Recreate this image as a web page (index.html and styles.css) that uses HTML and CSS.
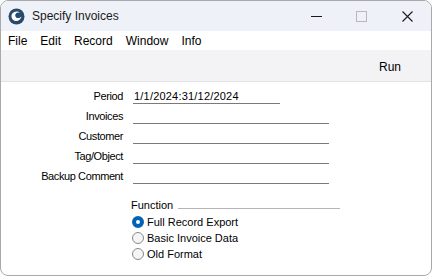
FILE: index.html
```html
<!DOCTYPE html>
<html lang="en">
<head>
    <meta charset="UTF-8">
    <title>Specify Invoices</title>
    <link rel="stylesheet" href="styles.css">
</head>
<body>
    <div class="window">
        <div class="titlebar">
            <svg class="app-icon" width="17" height="17" viewBox="0 0 17 17">
                <circle cx="8.5" cy="8.5" r="8" fill="#284a6c"/>
                <path d="M3.5 7 C4.5 3.5 9.5 2.5 12 4.5 C9 4 6.5 5.5 7.5 8.5 C8.5 10.5 11.5 10.5 13.5 8.5 C13 12 9 14 6 12.5 C4 11.5 3.2 9.2 3.5 7 Z" fill="#ffffff"/>
            </svg>
            <span class="title">Specify Invoices</span>
            <div class="controls">
                <span class="ctl-min"></span>
                <span class="ctl-max"></span>
                <svg class="ctl-close" width="11" height="11" viewBox="0 0 11 11">
                    <path d="M0.5 0.5 L10.5 10.5 M10.5 0.5 L0.5 10.5" stroke="#1a1a1a" stroke-width="1.1"/>
                </svg>
            </div>
        </div>

        <div class="menubar">
            <span>File</span>
            <span>Edit</span>
            <span>Record</span>
            <span>Window</span>
            <span>Info</span>
        </div>

        <div class="toolbar">
            <span class="tool-btn">Run</span>
        </div>

        <div class="content">
            <div class="form">
                <label>Period</label>
                <div class="field short">1/1/2024:31/12/2024</div>
                <label>Invoices</label>
                <div class="field"></div>
                <label>Customer</label>
                <div class="field"></div>
                <label>Tag/Object</label>
                <div class="field"></div>
                <label>Backup Comment</label>
                <div class="field"></div>
            </div>

            <div class="group">
                <div class="group-head">
                    <span>Function</span>
                    <span class="group-line"></span>
                </div>
                <div class="radio"><span class="dot checked"></span>Full Record Export</div>
                <div class="radio"><span class="dot"></span>Basic Invoice Data</div>
                <div class="radio"><span class="dot"></span>Old Format</div>
            </div>
        </div>
    </div>
</body>
</html>
```

FILE: styles.css
```css
html, body {
    margin: 0;
    padding: 0;
    background: #ffffff;
}
body {
    font-family: "Liberation Sans", Arial, sans-serif;
    font-size: 12px;
    color: #000;
}
.window {
    width: 432px;
    height: 276px;
    box-sizing: border-box;
    border: 1px solid #a9a9a9;
    border-radius: 8px;
    overflow: hidden;
    display: flex;
    flex-direction: column;
    background: #ffffff;
}
.titlebar {
    height: 30px;
    background: #eef2f8;
    display: flex;
    align-items: center;
    padding-left: 7px;
}
.app-icon {
    margin-right: 7px;
}
.title {
    font-size: 12px;
    color: #1a1a1a;
}
.controls {
    margin-left: auto;
    display: flex;
    align-items: center;
    height: 100%;
}
.ctl-min {
    width: 11px;
    height: 1px;
    background: #1a1a1a;
    margin-right: 34px;
}
.ctl-max {
    width: 9px;
    height: 9px;
    border: 1px solid #b8b8b8;
    margin-right: 35px;
}
.ctl-close {
    margin-right: 18px;
}
.menubar {
    height: 19px;
    display: flex;
    align-items: center;
    gap: 13px;
    padding-left: 7px;
    background: #ffffff;
}
.toolbar {
    height: 31px;
    background: #f3f3f5;
    border-bottom: 1px solid #e2e2e2;
    display: flex;
    align-items: center;
    justify-content: flex-end;
    padding-right: 30px;
}
.tool-btn {
    padding-top: 3px;
}
.content {
    flex: 1;
    font-size: 11px;
}
.form {
    display: grid;
    grid-template-columns: 122px 196px;
    column-gap: 10px;
    row-gap: 5px;
    padding-top: 7px;
}
.form label {
    text-align: right;
    line-height: 14px;
    height: 15px;
    letter-spacing: -0.4px;
}
.field {
    height: 14px;
    line-height: 14px;
    border-bottom: 1px solid #7a7a7a;
    padding-left: 1px;
    letter-spacing: 0.2px;
}
.field.short {
    width: 146px;
}
.group {
    margin-left: 129px;
    width: 210px;
    margin-top: 14px;
}
.group-head {
    display: flex;
    align-items: flex-end;
    height: 14px;
    line-height: 14px;
    padding-left: 1px;
    margin-bottom: 2px;
}
.group-line {
    flex: 1;
    border-bottom: 1px solid #b5b5b5;
    margin-left: 5px;
    margin-bottom: 3px;
}
.radio {
    display: flex;
    align-items: center;
    height: 16px;
    padding-left: 2px;
}
.dot {
    width: 10px;
    height: 10px;
    border: 1px solid #8a8a8a;
    border-radius: 50%;
    background: #f5f5f5;
    margin-right: 3px;
    box-sizing: content-box;
}
.dot.checked {
    width: 4px;
    height: 4px;
    border: 4px solid #0063b8;
    background: #ffffff;
}
```
